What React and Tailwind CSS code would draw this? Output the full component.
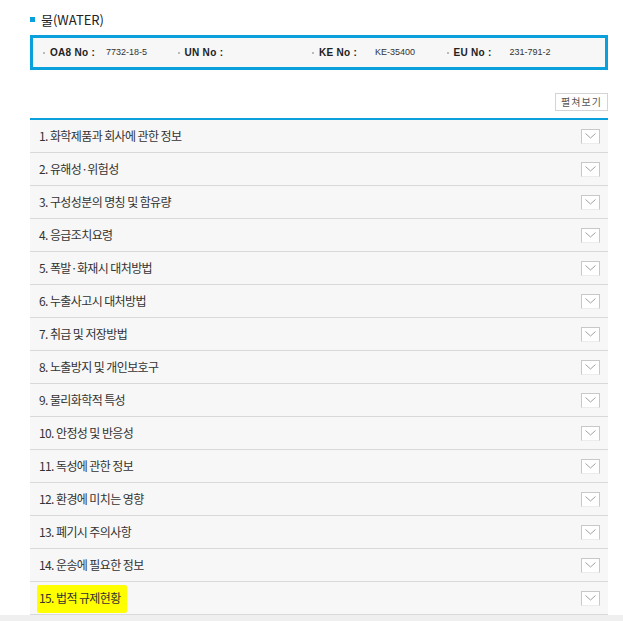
import React from "react";

const sections = [
    "1. 화학제품과 회사에 관한 정보",
    "2. 유해성·위험성",
    "3. 구성성분의 명칭 및 함유량",
    "4. 응급조치요령",
    "5. 폭발·화재시 대처방법",
    "6. 누출사고시 대처방법",
    "7. 취급 및 저장방법",
    "8. 노출방지 및 개인보호구",
    "9. 물리화학적 특성",
    "10. 안정성 및 반응성",
    "11. 독성에 관한 정보",
    "12. 환경에 미치는 영향",
    "13. 폐기시 주의사항",
    "14. 운송에 필요한 정보",
    "15. 법적 규제현황",
];

const ids = [
    { label: "OA8 No", value: "7732-18-5" },
    { label: "UN No", value: "" },
    { label: "KE No", value: "KE-35400" },
    { label: "EU No", value: "231-791-2" },
];

function Chevron() {
    return (
        <span className="w-[19px] h-[15px] bg-white border border-[#c8c8c8] border-b-[#ececec] flex items-center justify-center">
            <svg width="11" height="6" viewBox="0 0 11 6">
                <path d="M0.5 0.5 L5.5 5 L10.5 0.5" fill="none" stroke="#a0a0a0" strokeWidth="1" />
            </svg>
        </span>
    );
}

function App() {
    return (
        <div className="min-h-[621px] bg-white flex flex-col" style={{ fontFamily: '"Noto Sans CJK KR", "Noto Sans", sans-serif' }}>
            <div className="ml-[30px] w-[578px] pt-[11px]">
                <div className="flex items-center h-[16px]">
                    <span className="w-[5px] h-[5px] bg-[#0aa0dc] mr-[6px]" />
                    <span className="text-[13px] text-[#222] leading-none">물(WATER)</span>
                </div>

                <div className="mt-[8px] h-[35px] border-[3px] border-[#0aa0dc] bg-[#f7f7f7] flex items-center pl-[10px]">
                    {ids.map((item) => (
                        <div key={item.label} className="w-[134.5px] flex items-center">
                            <span className="w-[2px] h-[2px] bg-[#bbbbbb] mr-[5px]" />
                            <span
                                className="w-[56px] text-[10px] font-bold text-[#222] tracking-[0.3px]"
                                style={{ fontFamily: '"Liberation Sans", sans-serif' }}
                            >
                                {item.label} :
                            </span>
                            <span
                                className="text-[9px] text-[#333]"
                                style={{ fontFamily: '"Liberation Sans", sans-serif' }}
                            >
                                {item.value}
                            </span>
                        </div>
                    ))}
                </div>

                <div className="flex justify-end mt-[23px]">
                    <button className="w-[53px] h-[18px] bg-white border border-[#d4d4d4] text-[10px] text-[#555] tracking-[1px] leading-none">
                        펼쳐보기
                    </button>
                </div>

                <div className="mt-[7px] border-t-2 border-[#0aa0dc]">
                    {sections.map((name, i) => (
                        <div
                            key={name}
                            className="h-[33px] bg-[#f7f7f7] border-b border-[#d9d9d9] flex items-center justify-between pl-[9px] pr-[8px]"
                        >
                            {i === 14 ? (
                                <span className="relative text-[12px] text-[#333] tracking-[-0.6px]">
                                    <span className="absolute left-[-2px] right-[-6px] top-[-4px] bottom-[-6px] bg-[#ffff00] rounded-[2px]" />
                                    <span className="relative">{name}</span>
                                </span>
                            ) : (
                                <span className="text-[12px] text-[#333] tracking-[-0.6px]">{name}</span>
                            )}
                            <Chevron />
                        </div>
                    ))}
                </div>
            </div>
            <div className="flex-1 bg-[#efefef]" />
        </div>
    );
}

export default App;
